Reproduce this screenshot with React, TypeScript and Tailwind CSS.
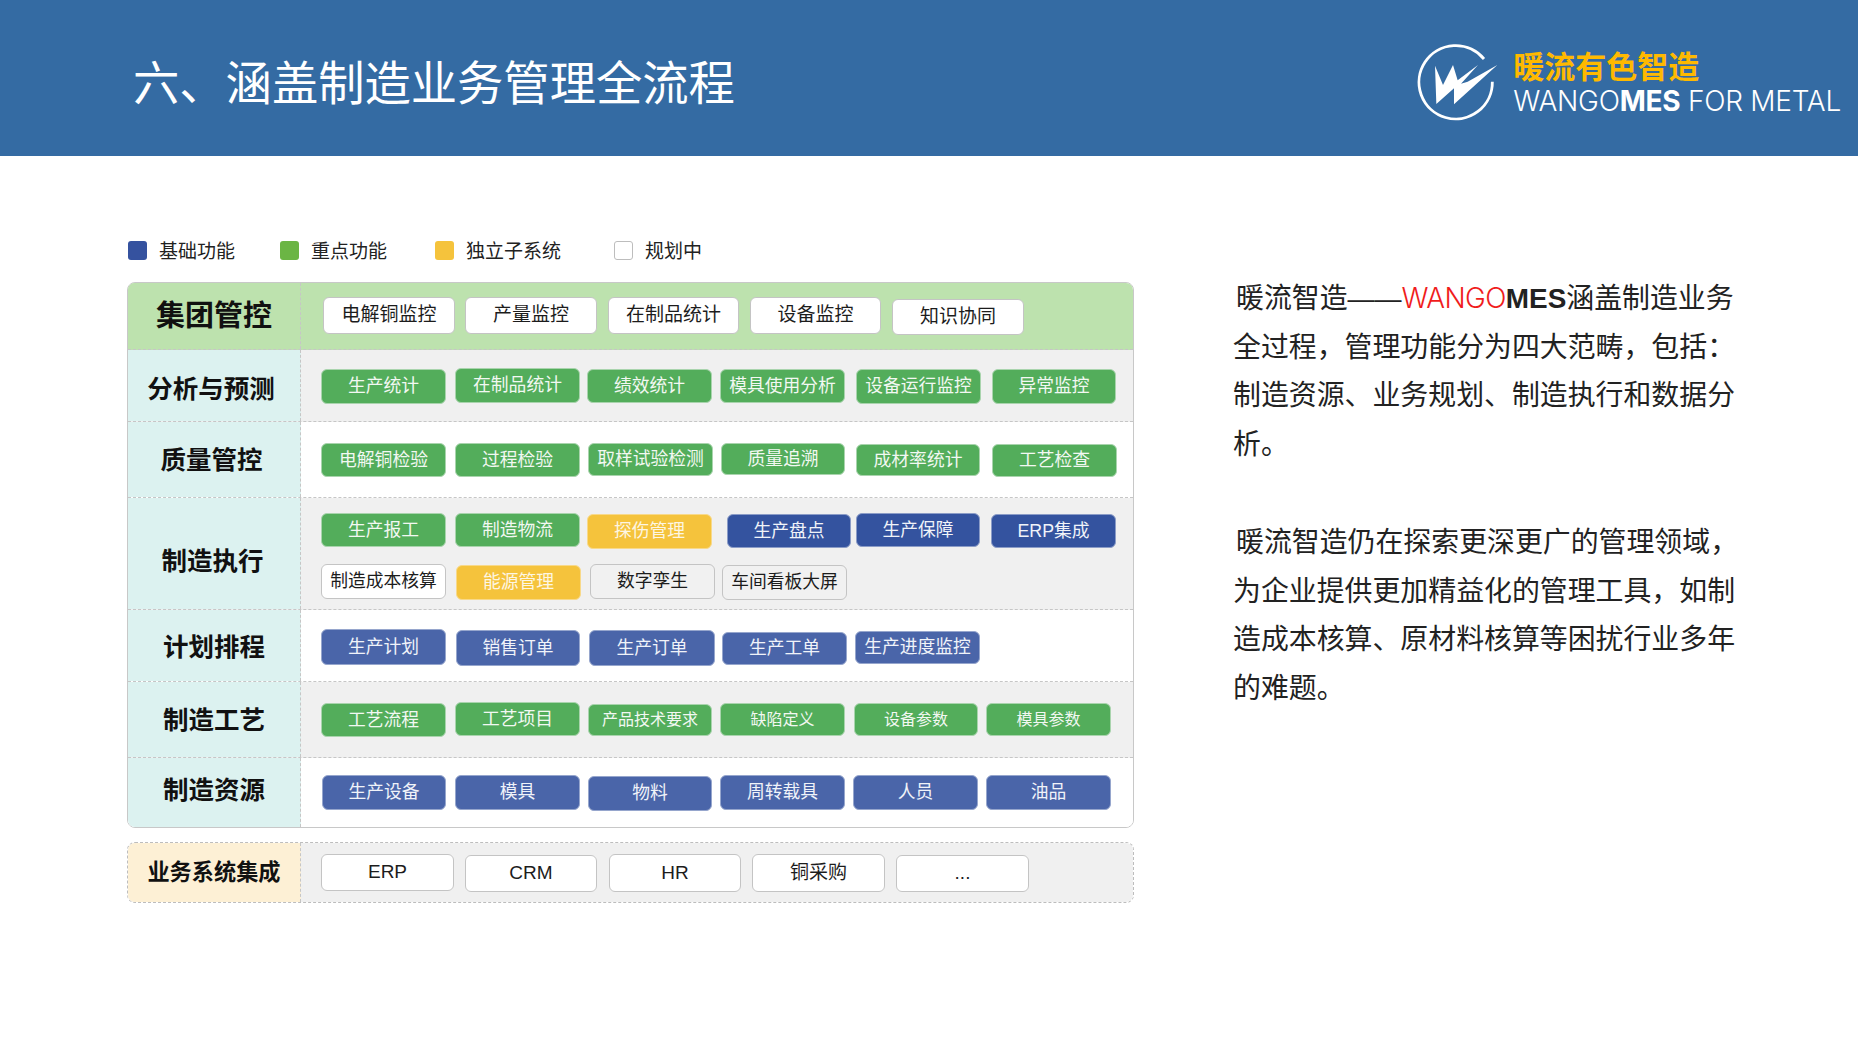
import React from "react";

const SANS = "font-['Liberation_Sans','Noto_Sans_CJK_SC',sans-serif]";
const CJK = "font-['Noto_Sans_CJK_SC',sans-serif]";

const chipBase = `flex shrink-0 items-center justify-center rounded-[6px] border whitespace-nowrap ${SANS}`;
const KIND: Record<string, string> = {
  white: "bg-white border-[#c4c4c4] text-[#1c1c1c]",
  plain: "bg-[#f1f1f1] border-[#c4c4c4] text-[#1c1c1c]",
  green: "bg-[#53ad5b] border-[#a9d4ad] text-[#f2f8f2]",
  yellow: "bg-[#f5c33c] border-[#f8d98a] text-[#fdf6e3]",
  navy: "bg-[#34539f] border-[#8b9cc7] text-[#f0f3f9]",
  blue: "bg-[#4a65a9] border-[#96a6cd] text-[#f0f3f9]",
};

function Chip({ kind, className, children }: { kind: string; className: string; children: React.ReactNode }) {
  return <div className={`${chipBase} ${KIND[kind]} ${className}`}>{children}</div>;
}

function Row({
  h,
  labelBg,
  bg,
  labelClass,
  label,
  last,
  children,
}: {
  h: string;
  labelBg: string;
  bg: string;
  labelClass: string;
  label: string;
  last?: boolean;
  children: React.ReactNode;
}) {
  return (
    <div className={`flex ${h} ${bg} ${last ? "" : "border-b border-dashed border-[#c6c6c6]"}`}>
      <div
        className={`flex w-[173px] shrink-0 items-center justify-center border-r border-dashed border-[#c6c6c6] font-bold text-[#111] ${CJK} ${labelBg} ${labelClass}`}
      >
        {label}
      </div>
      <div className="min-w-0 flex-1">{children}</div>
    </div>
  );
}

function Line({ className, children }: { className?: string; children: React.ReactNode }) {
  return <div className={`flex items-start ${className ?? ""}`}>{children}</div>;
}

function LegendItem({ color, text, className }: { color: string; text: string; className: string }) {
  return (
    <div className={`flex items-center gap-[12px] ${className}`}>
      <span className={`block h-[19px] w-[19px] rounded-[3px] ${color}`} />
      <span className={`mb-[3px] text-[19px] leading-[19px] text-[#222] ${CJK}`}>{text}</span>
    </div>
  );
}

function Logo() {
  return (
    <svg viewBox="0 0 300 285" className="h-[95px] w-[100px] shrink-0">
      <path d="M250 140 A110 110 0 1 1 225 72" fill="none" stroke="#fff" strokeWidth="8.5" />
      <polygon
        fill="#fff"
        points="78,92 102,150 132,90 146,136 207,90 156,146 176,140 265,90 135,208 135,160 82,207"
      />
    </svg>
  );
}

export default function App() {
  const g = "text-[17.8px]";
  const s = "text-[16px]";
  const w = "text-[19px]";
  return (
    <div className="min-h-[1041px] w-[1858px] bg-white">
      <header className="flex h-[156px] items-center bg-[#346ba3]">
        <h1 className={`ml-[133px] mt-[5px] text-[46.3px] leading-none font-normal whitespace-nowrap text-white ${CJK}`}>
          六、涵盖制造业务管理全流程
        </h1>
        <div className="ml-auto mr-[17px] flex items-center pt-[9px]">
          <Logo />
          <div className="ml-[4px] mb-[1px] flex flex-col">
            <span className={`mt-[1px] text-[31px] leading-[31px] font-bold whitespace-nowrap text-[#ffb900] ${CJK}`}>暖流有色智造</span>
            <span className="mt-[6px] font-['Inter',sans-serif] text-[28px] leading-[30px] font-light tracking-[-0.25px] whitespace-nowrap text-white">
              WANGO<span className="font-bold">MES</span> FOR METAL
            </span>
          </div>
        </div>
      </header>

      <main className="flex">
        <section className="ml-[127px] w-[1007px] shrink-0 pt-[85px]">
          <div className="flex h-[19px] items-center">
            <LegendItem color="ml-[1px] bg-[#35529f]" text="基础功能" className="" />
            <LegendItem color="bg-[#6bb544]" text="重点功能" className="ml-[45px]" />
            <LegendItem color="bg-[#f5c33c]" text="独立子系统" className="ml-[48px]" />
            <LegendItem color="border border-[#bdbdbd] bg-white" text="规划中" className="ml-[53px]" />
          </div>

          <div className="mt-[22px] w-[1007px] overflow-hidden rounded-[8px] border border-[#c8c8c8]">
            <Row h="h-[67px]" labelBg="bg-[#bde2ae]" bg="bg-[#bde2ae]" labelClass="pb-[4px] text-[29px]" label="集团管控">
              <Line>
                <Chip kind="white" className={`${w} ml-[22px] mt-[14px] h-[37px] w-[132px]`}>电解铜监控</Chip>
                <Chip kind="white" className={`${w} ml-[10px] mt-[14px] h-[37px] w-[132px]`}>产量监控</Chip>
                <Chip kind="white" className={`${w} ml-[11px] mt-[14px] h-[37px] w-[131px]`}>在制品统计</Chip>
                <Chip kind="white" className={`${w} ml-[11px] mt-[14px] h-[37px] w-[131px]`}>设备监控</Chip>
                <Chip kind="white" className={`${w} ml-[11px] mt-[16px] h-[36px] w-[132px]`}>知识协同</Chip>
              </Line>
            </Row>

            <Row h="h-[72px]" labelBg="bg-[#dcf2f0]" bg="bg-[#f0f0f0]" labelClass="pr-[6px] pt-[4px] text-[25.5px]" label="分析与预测">
              <Line>
                <Chip kind="green" className={`${g} ml-[20px] mt-[19px] h-[35px] w-[125px]`}>生产统计</Chip>
                <Chip kind="green" className={`${g} ml-[9px] mt-[18px] h-[35px] w-[125px]`}>在制品统计</Chip>
                <Chip kind="green" className={`${g} ml-[7px] mt-[19px] h-[34px] w-[125px]`}>绩效统计</Chip>
                <Chip kind="green" className={`${g} ml-[8px] mt-[19px] h-[34px] w-[125px]`}>模具使用分析</Chip>
                <Chip kind="green" className={`${g} ml-[11px] mt-[19px] h-[35px] w-[125px]`}>设备运行监控</Chip>
                <Chip kind="green" className={`${g} ml-[11px] mt-[19px] h-[35px] w-[124px]`}>异常监控</Chip>
              </Line>
            </Row>

            <Row h="h-[76px]" labelBg="bg-[#dcf2f0]" bg="bg-white" labelClass="pr-[5px] pb-[3px] text-[25.5px]" label="质量管控">
              <Line>
                <Chip kind="green" className={`${g} ml-[20px] mt-[21px] h-[34px] w-[125px]`}>电解铜检验</Chip>
                <Chip kind="green" className={`${g} ml-[9px] mt-[21px] h-[34px] w-[125px]`}>过程检验</Chip>
                <Chip kind="green" className={`${g} ml-[8px] mt-[21px] h-[33px] w-[125px]`}>取样试验检测</Chip>
                <Chip kind="green" className={`${g} ml-[8px] mt-[21px] h-[32px] w-[124px]`}>质量追溯</Chip>
                <Chip kind="green" className={`${g} ml-[11px] mt-[22px] h-[32px] w-[124px]`}>成材率统计</Chip>
                <Chip kind="green" className={`${g} ml-[12px] mt-[22px] h-[33px] w-[125px]`}>工艺检查</Chip>
              </Line>
            </Row>

            <Row h="h-[112px]" labelBg="bg-[#dcf2f0]" bg="bg-[#f0f0f0]" labelClass="pr-[3px] pt-[11px] text-[25.5px]" label="制造执行">
              <Line className="h-[51px]">
                <Chip kind="green" className={`${g} ml-[20px] mt-[15px] h-[34px] w-[125px]`}>生产报工</Chip>
                <Chip kind="green" className={`${g} ml-[9px] mt-[15px] h-[34px] w-[125px]`}>制造物流</Chip>
                <Chip kind="yellow" className={`${g} ml-[7px] mt-[16px] h-[35px] w-[125px]`}>探伤管理</Chip>
                <Chip kind="navy" className={`${g} ml-[15px] mt-[16px] h-[34px] w-[124px]`}>生产盘点</Chip>
                <Chip kind="navy" className={`${g} ml-[5px] mt-[15px] h-[34px] w-[124px]`}>生产保障</Chip>
                <Chip kind="navy" className={`${g} ml-[11px] mt-[16px] h-[34px] w-[125px]`}>ERP集成</Chip>
              </Line>
              <Line>
                <Chip kind="white" className={`${g} ml-[20px] mt-[15px] h-[35px] w-[125px]`}>制造成本核算</Chip>
                <Chip kind="yellow" className={`${g} ml-[10px] mt-[16px] h-[35px] w-[125px]`}>能源管理</Chip>
                <Chip kind="plain" className={`${g} ml-[9px] mt-[15px] h-[35px] w-[125px]`}>数字孪生</Chip>
                <Chip kind="plain" className={`${g} ml-[7px] mt-[16px] h-[35px] w-[125px]`}>车间看板大屏</Chip>
              </Line>
            </Row>

            <Row h="h-[72px]" labelBg="bg-[#dcf2f0]" bg="bg-white" labelClass="text-[25.5px]" label="计划排程">
              <Line>
                <Chip kind="blue" className={`${g} ml-[20px] mt-[19px] h-[36px] w-[125px]`}>生产计划</Chip>
                <Chip kind="blue" className={`${g} ml-[10px] mt-[20px] h-[36px] w-[124px]`}>销售订单</Chip>
                <Chip kind="blue" className={`${g} ml-[9px] mt-[20px] h-[36px] w-[126px]`}>生产订单</Chip>
                <Chip kind="blue" className={`${g} ml-[7px] mt-[22px] h-[33px] w-[125px]`}>生产工单</Chip>
                <Chip kind="blue" className={`${g} ml-[8px] mt-[21px] h-[33px] w-[125px]`}>生产进度监控</Chip>
              </Line>
            </Row>

            <Row h="h-[76px]" labelBg="bg-[#dcf2f0]" bg="bg-[#f0f0f0]" labelClass="pb-[2px] text-[25.5px]" label="制造工艺">
              <Line>
                <Chip kind="green" className={`${g} ml-[20px] mt-[21px] h-[34px] w-[125px]`}>工艺流程</Chip>
                <Chip kind="green" className={`${g} ml-[9px] mt-[20px] h-[34px] w-[125px]`}>工艺项目</Chip>
                <Chip kind="green" className={`${s} ml-[8px] mt-[22px] h-[32px] w-[124px]`}>产品技术要求</Chip>
                <Chip kind="green" className={`${s} ml-[8px] mt-[21px] h-[33px] w-[125px]`}>缺陷定义</Chip>
                <Chip kind="green" className={`${s} ml-[9px] mt-[21px] h-[33px] w-[124px]`}>设备参数</Chip>
                <Chip kind="green" className={`${s} ml-[8px] mt-[21px] h-[33px] w-[125px]`}>模具参数</Chip>
              </Line>
            </Row>

            <Row h="h-[69px]" labelBg="bg-[#dcf2f0]" bg="bg-white" labelClass="pb-[8px] text-[25.5px]" label="制造资源" last>
              <Line>
                <Chip kind="blue" className={`${g} ml-[21px] mt-[17px] h-[35px] w-[124px]`}>生产设备</Chip>
                <Chip kind="blue" className={`${g} ml-[9px] mt-[17px] h-[35px] w-[125px]`}>模具</Chip>
                <Chip kind="blue" className={`${g} ml-[8px] mt-[18px] h-[35px] w-[124px]`}>物料</Chip>
                <Chip kind="blue" className={`${g} ml-[8px] mt-[17px] h-[35px] w-[125px]`}>周转载具</Chip>
                <Chip kind="blue" className={`${g} ml-[8px] mt-[17px] h-[35px] w-[125px]`}>人员</Chip>
                <Chip kind="blue" className={`${g} ml-[8px] mt-[17px] h-[35px] w-[125px]`}>油品</Chip>
              </Line>
            </Row>
          </div>

          <div className="mt-[14px] h-[61px] w-[1007px] overflow-hidden rounded-[8px] border border-dashed border-[#bdbdbd]">
            <Row h="h-[59px]" labelBg="bg-[#fdf0d5]" bg="bg-[#f0f0f0]" labelClass="pb-[4px] text-[22.2px]" label="业务系统集成" last>
              <Line>
                <Chip kind="white" className={`${w} ml-[20px] mt-[11px] h-[37px] w-[133px]`}>ERP</Chip>
                <Chip kind="white" className={`${w} ml-[11px] mt-[12px] h-[37px] w-[132px]`}>CRM</Chip>
                <Chip kind="white" className={`${w} ml-[12px] mt-[11px] h-[38px] w-[132px]`}>HR</Chip>
                <Chip kind="white" className={`${w} ml-[11px] mt-[11px] h-[38px] w-[133px]`}>铜采购</Chip>
                <Chip kind="white" className={`${w} ml-[11px] mt-[12px] h-[37px] w-[133px]`}>...</Chip>
              </Line>
            </Row>
          </div>
        </section>

        <section className={`ml-[99px] pt-[116px] text-[27.9px] leading-[48.7px] whitespace-nowrap text-[#222] ${CJK}`}>
          <p className="ml-[3px] h-[48.7px]">
            暖流智造
            <span className="font-['Liberation_Sans',sans-serif] text-[27px] leading-none">——</span>
            <span className="font-['Inter',sans-serif] leading-none font-light tracking-[-0.6px] text-[#f01c1c]">WANGO</span>
            <span className="font-['Liberation_Sans',sans-serif] leading-none font-bold">MES</span>
            涵盖制造业务
          </p>
          <p>全过程，管理功能分为四大范畴，包括：</p>
          <p>制造资源、业务规划、制造执行和数据分</p>
          <p>析。</p>
          <p className="ml-[3px] mt-[49px]">暖流智造仍在探索更深更广的管理领域，</p>
          <p>为企业提供更加精益化的管理工具，如制</p>
          <p>造成本核算、原材料核算等困扰行业多年</p>
          <p>的难题。</p>
        </section>
      </main>
    </div>
  );
}
